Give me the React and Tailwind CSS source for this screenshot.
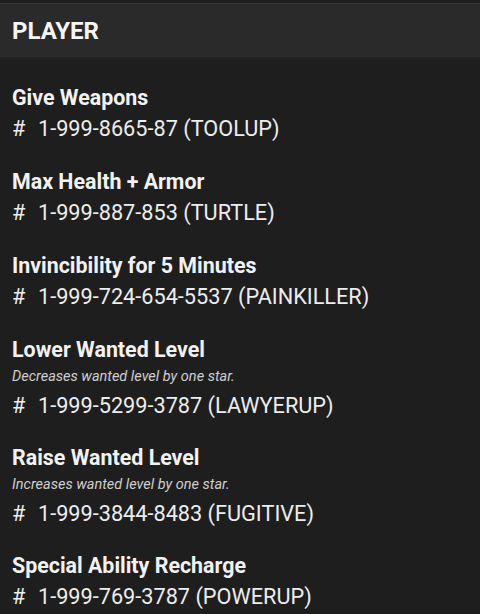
const cheats = [
  { title: "Give Weapons", code: "1-999-8665-87 (TOOLUP)" },
  { title: "Max Health + Armor", code: "1-999-887-853 (TURTLE)" },
  { title: "Invincibility for 5 Minutes", code: "1-999-724-654-5537 (PAINKILLER)" },
  {
    title: "Lower Wanted Level",
    note: "Decreases wanted level by one star.",
    code: "1-999-5299-3787 (LAWYERUP)",
  },
  {
    title: "Raise Wanted Level",
    note: "Increases wanted level by one star.",
    code: "1-999-3844-8483 (FUGITIVE)",
  },
  { title: "Special Ability Recharge", code: "1-999-769-3787 (POWERUP)" },
];

function Cheat({ cheat }) {
  return (
    <div className={cheat.note ? "h-[108px]" : "h-[84px]"}>
      <div className="text-[21.4px] font-bold leading-[24px] text-[#f2f2f2]">{cheat.title}</div>
      {cheat.note && (
        <div className="mt-[3px] text-[14.5px] italic leading-[24px] text-[#cfcfcf]">{cheat.note}</div>
      )}
      <div className={`${cheat.note ? "mt-[5px]" : "mt-[7px]"} flex text-[21.7px] leading-[24px] text-[#ededed]`}>
        <span className="w-[26px]">#</span>
        <span>{cheat.code}</span>
      </div>
    </div>
  );
}

export default function App() {
  return (
    <div className="h-[614px] w-[480px] overflow-hidden bg-[#1e1e1e] font-['Roboto',sans-serif]">
      {/* title bar */}
      <div className="h-[3px] bg-[#1f1f1f]" />
      <div className="flex h-[56px] items-center border-t border-[#353535] border-b-2 border-b-[#222] bg-[#2a2a2a] px-[12px]">
        <h1 className="text-[24px] font-bold text-[#f5f5f5]">PLAYER</h1>
      </div>

      <div className="px-[12px] pt-[27px]">
        {cheats.map((c) => (
          <Cheat key={c.title} cheat={c} />
        ))}
      </div>
    </div>
  );
}
